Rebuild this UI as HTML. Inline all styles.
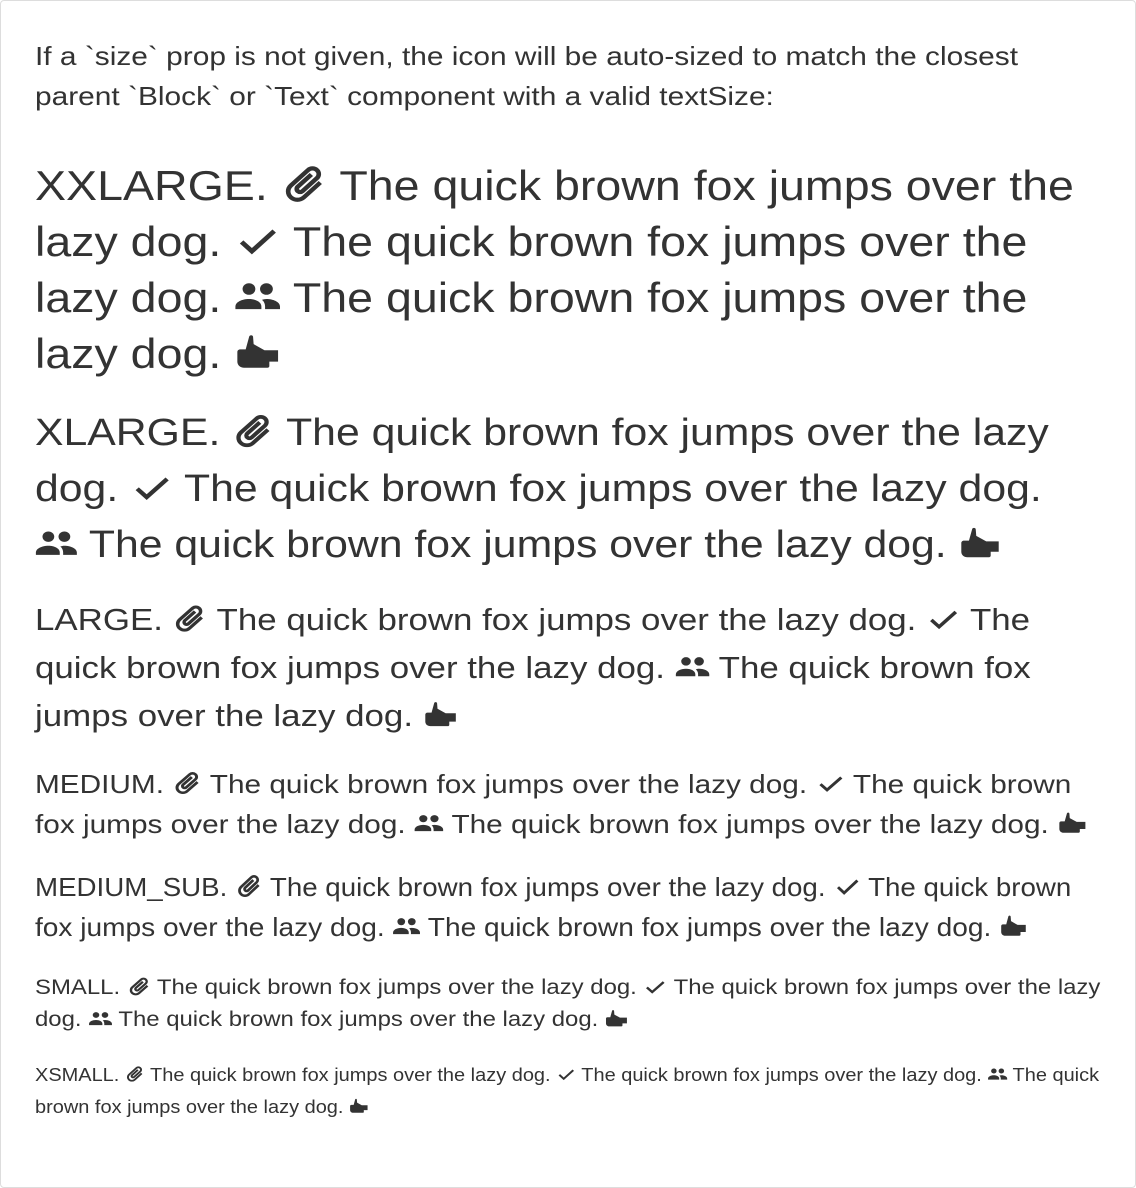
<!DOCTYPE html>
<html><head><meta charset="utf-8"><style>
html,body{margin:0;padding:0;background:#fff;}
body{width:1136px;height:1188px;position:relative;overflow:hidden;font-family:"Liberation Sans",sans-serif;color:#333;}
.frame{position:absolute;left:0;top:0;width:1134px;height:1186px;border:1px solid #ddd;border-radius:4px;}
.l{position:absolute;left:35px;white-space:nowrap;transform-origin:0 50%;}
svg{width:1em;height:1em;vertical-align:-0.13em;fill:#333;}
.s0{transform:scaleX(1.149)}
.s1{transform:scaleX(1.108)}
.s2{transform:scaleX(1.125)}
.s3{transform:scaleX(1.125)}
.s4{transform:scaleX(1.145)}
.s5{transform:scaleX(1.139)}
.s6{transform:scaleX(1.109)}
</style></head><body>
<div class="frame"></div>
<svg style="display:none"><defs>
<symbol id="clip" viewBox="0 0 24 24"><g transform="rotate(45 12 12)" stroke="#333" stroke-width="0.9"><path d="M16.5 6v11.5c0 2.21-1.790 4-4 4s-4-1.79-4-4V5c0-1.38 1.12-2.5 2.5-2.5s2.5 1.12 2.5 2.5v10.5c0 .55-.45 1-1 1s-1-.45-1-1V6H10v9.5c0 1.38 1.12 2.5 2.5 2.5s2.5-1.12 2.5-2.5V5c0-2.21-1.79-4-4-4S7 2.79 7 5v12.5c0 3.04 2.46 5.5 5.5 5.5s5.5-2.46 5.5-5.5V6h-1.5z"/></g></symbol>
<symbol id="chk" viewBox="0 0 24 24"><path d="M9 16.6L4.6 12.2l-1.8 1.8L9 20.2 21.4 7.8l-1.8-1.8z"/></symbol>
<symbol id="ppl" viewBox="0 0 24 24"><circle cx="7.5" cy="8" r="3.3"/><circle cx="16.5" cy="8" r="3.3"/><path d="M0.5 19.5v-1.5c0-2.6 3.5-4.3 7-4.3s6.4 1.7 6.4 4.3v1.5z"/><path d="M15.8 19.5v-1.5c0-1.6-.6-2.9-1.6-3.8 .8-.3 1.5-.5 2.3-.5 3.5 0 7 1.7 7 4.3v1.5z"/></symbol>
<symbol id="thb" viewBox="0 0 24 24"><path d="M1.5 12c0-.8.6-1.5 1.5-1.5H5.8L7.6 3.2c.3-1.1 1.9-1 2 .1l.3 4.2L15.5 11H22.5v6.5h-4.5V20c0 .6-.4 1-1 1H5c-2 0-3.5-1.5-3.5-3.5z"/></symbol>
</defs></svg>

<div class="l s0" style="top:36px;font-size:26px;line-height:40px">If a `size` prop is not given, the icon will be auto-sized to match the closest</div>
<div class="l s0" style="top:76px;font-size:26px;line-height:40px">parent `Block` or `Text` component with a valid textSize:</div>

<div class="l s1" style="top:158px;font-size:42px;line-height:56px">XXLARGE. <svg><use href="#clip"/></svg> The quick brown fox jumps over the</div>
<div class="l s1" style="top:214px;font-size:42px;line-height:56px">lazy dog. <svg><use href="#chk"/></svg> The quick brown fox jumps over the</div>
<div class="l s1" style="top:270px;font-size:42px;line-height:56px">lazy dog. <svg><use href="#ppl"/></svg> The quick brown fox jumps over the</div>
<div class="l s1" style="top:326px;font-size:42px;line-height:56px">lazy dog. <svg><use href="#thb"/></svg></div>

<div class="l s2" style="top:405px;font-size:38px;line-height:56px">XLARGE. <svg><use href="#clip"/></svg> The quick brown fox jumps over the lazy</div>
<div class="l s2" style="top:461px;font-size:38px;line-height:56px">dog. <svg><use href="#chk"/></svg> The quick brown fox jumps over the lazy dog.</div>
<div class="l s2" style="top:517px;font-size:38px;line-height:56px"><svg><use href="#ppl"/></svg> The quick brown fox jumps over the lazy dog. <svg><use href="#thb"/></svg></div>

<div class="l s3" style="top:596px;font-size:31px;line-height:48px">LARGE. <svg><use href="#clip"/></svg> The quick brown fox jumps over the lazy dog. <svg><use href="#chk"/></svg> The</div>
<div class="l s3" style="top:644px;font-size:31px;line-height:48px">quick brown fox jumps over the lazy dog. <svg><use href="#ppl"/></svg> The quick brown fox</div>
<div class="l s3" style="top:692px;font-size:31px;line-height:48px">jumps over the lazy dog. <svg><use href="#thb"/></svg></div>

<div class="l s4" style="top:764px;font-size:26px;line-height:40px">MEDIUM. <svg><use href="#clip"/></svg> The quick brown fox jumps over the lazy dog. <svg><use href="#chk"/></svg> The quick brown</div>
<div class="l s4" style="top:804px;font-size:26px;line-height:40px">fox jumps over the lazy dog. <svg><use href="#ppl"/></svg> The quick brown fox jumps over the lazy dog. <svg><use href="#thb"/></svg></div>

<div class="l" style="top:867px;font-size:26px;line-height:40px;transform:scaleX(1.065)">MEDIUM_SUB. <svg><use href="#clip"/></svg> The quick brown fox jumps over the lazy dog. <svg><use href="#chk"/></svg> The quick brown</div>
<div class="l" style="top:907px;font-size:26px;line-height:40px;transform:scaleX(1.08)">fox jumps over the lazy dog. <svg><use href="#ppl"/></svg> The quick brown fox jumps over the lazy dog. <svg><use href="#thb"/></svg></div>

<div class="l s5" style="top:972px;font-size:21px;line-height:32px">SMALL. <svg><use href="#clip"/></svg> The quick brown fox jumps over the lazy dog. <svg><use href="#chk"/></svg> The quick brown fox jumps over the lazy</div>
<div class="l s5" style="top:1004px;font-size:21px;line-height:32px">dog. <svg><use href="#ppl"/></svg> The quick brown fox jumps over the lazy dog. <svg><use href="#thb"/></svg></div>

<div class="l s6" style="top:1059px;font-size:18px;line-height:32px">XSMALL. <svg><use href="#clip"/></svg> The quick brown fox jumps over the lazy dog. <svg><use href="#chk"/></svg> The quick brown fox jumps over the lazy dog. <svg><use href="#ppl"/></svg> The quick</div>
<div class="l s6" style="top:1091px;font-size:18px;line-height:32px">brown fox jumps over the lazy dog. <svg><use href="#thb"/></svg></div>
</body></html>
